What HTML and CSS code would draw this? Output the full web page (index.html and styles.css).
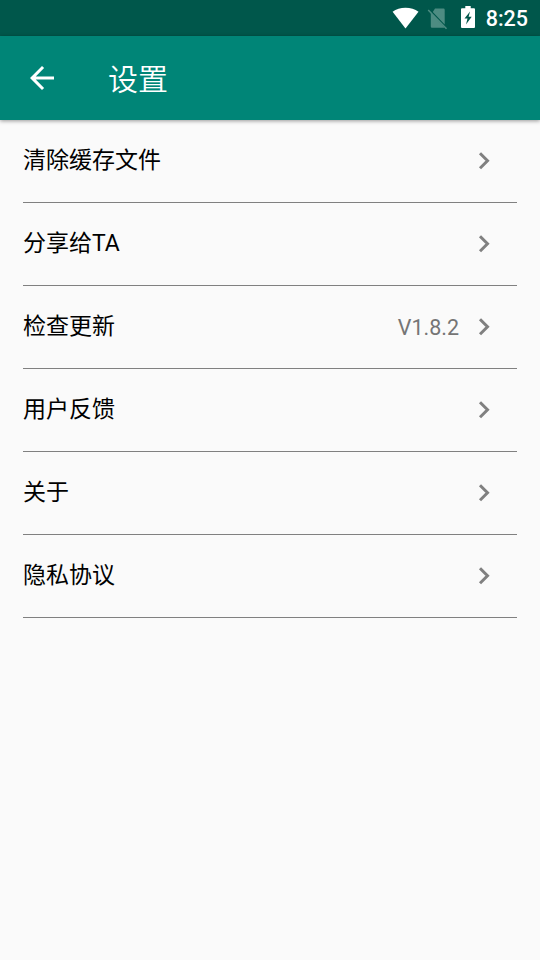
FILE: index.html
```html
<!DOCTYPE html>
<html lang="zh-CN">
<head>
<meta charset="utf-8">
<title>设置</title>
<link rel="stylesheet" href="styles.css">
</head>
<body>
<div class="status">
  <svg class="wifi" width="26" height="22" viewBox="0 0 26 22"><path d="M12.500 21.500-.4 4.800C3.100 2 7.500 .7 12.500 .7s9.500 1.300 13 4.100z" fill="#fff"/></svg>
  <svg class="sim" width="20" height="22" viewBox="0 0 20 22"><path d="M7 1.500h8.500q1.200 0 1.200 1.200v14.900L4.800 4.900zM2.800 5.600 16.400 20.200q-.4.600-1 .6H4q-1.200 0-1.200-1.200z" fill="#4d8c82"/><path d="M.2 3 18.500 21.700" stroke="#4d8c82" stroke-width="1.500"/></svg>
  <svg class="battery" width="14" height="22" viewBox="0 0 14 22"><path fill-rule="evenodd" d="M4.300 0h5.400v2.200h3.300Q14 2.200 14 3.200V21q0 1-1 1H1q-1 0-1-1V3.200q0-1 1-1h3.300zM9 5.500 3.500 12.500h3L5 18.500 10.700 10.800H7.600z" fill="#fff"/></svg>
  <span class="time">8:25</span>
</div>
<header class="bar">
  <svg class="back" width="24" height="24" viewBox="0 0 24 24"><path d="M24 10.500H5.750L14.100 2.100 12 0 0 12l12 12 2.100-2.100L5.750 13.500H24z" fill="#fff"/></svg>
  <h1 class="title">设置</h1>
</header>
<main class="list">
  <div class="row"><span class="label">清除缓存文件</span><svg class="arrow" width="12" height="18" viewBox="0 0 12 18"><path d="M2 1.200 9.500 8.700 2 16.200"/></svg></div>
  <div class="row"><span class="label">分享给TA</span><svg class="arrow" width="12" height="18" viewBox="0 0 12 18"><path d="M2 1.200 9.500 8.700 2 16.200"/></svg></div>
  <div class="row"><span class="label">检查更新</span><span class="version">V1.8.2</span><svg class="arrow" width="12" height="18" viewBox="0 0 12 18"><path d="M2 1.200 9.500 8.700 2 16.200"/></svg></div>
  <div class="row"><span class="label">用户反馈</span><svg class="arrow" width="12" height="18" viewBox="0 0 12 18"><path d="M2 1.200 9.500 8.700 2 16.200"/></svg></div>
  <div class="row"><span class="label">关于</span><svg class="arrow" width="12" height="18" viewBox="0 0 12 18"><path d="M2 1.200 9.500 8.700 2 16.200"/></svg></div>
  <div class="row"><span class="label">隐私协议</span><svg class="arrow" width="12" height="18" viewBox="0 0 12 18"><path d="M2 1.200 9.500 8.700 2 16.200"/></svg></div>
</main>
</body>
</html>
```
FILE: styles.css
```css
* { box-sizing: border-box; }
body {
  margin: 0;
  height: 960px;
  background: #fafafa;
  font-family: Roboto, "Noto Sans CJK SC", sans-serif;
}
svg { display: block; flex: none; overflow: visible; }
.status {
  height: 36px;
  display: flex;
  align-items: center;
  justify-content: flex-end;
  padding-right: 12px;
  background: #00574b;
}
.wifi { margin-right: 9px; }
.sim { margin-right: 13px; }
.battery { margin: -2px 11px 0 0; }
.time { padding-top: 2px; color: #fff; font-size: 21.500px; font-weight: 500; line-height: 36px; }
.bar {
  height: 84px;
  display: flex;
  align-items: center;
  padding-left: 30px;
  background: #008577;
  box-shadow: 0 1px 4px rgba(0, 0, 0, .4);
}
.title { margin: 0 0 0 54px; padding-top: 3px; color: #fff; font-size: 30px; font-weight: 350; line-height: 40px; }
.list { padding: 0 23px; }
.row {
  height: 83px;
  display: flex;
  align-items: center;
  padding-right: 26px;
  border-bottom: 1px solid #808080;
}
.label { flex: 1; color: #000; font-size: 23px; line-height: 34px; }
.version { margin-right: 19px; padding-top: 1px; color: #757575; font-size: 21.500px; }
.arrow { margin-right: 1px; fill: none; stroke: #808080; stroke-width: 3; }
```
